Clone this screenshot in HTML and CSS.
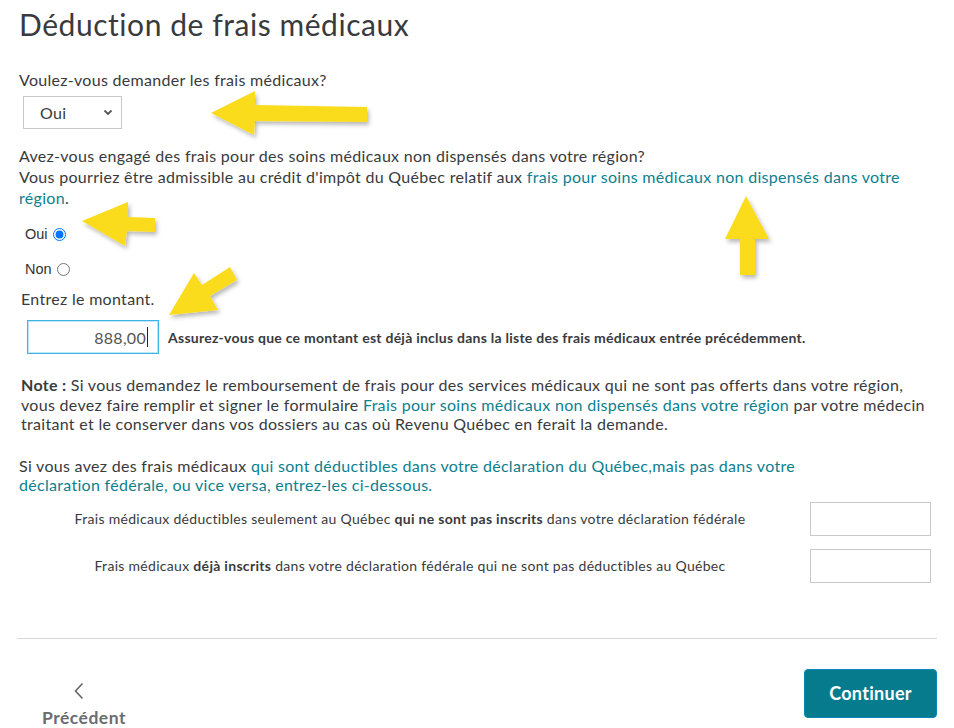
FILE: index.html
```html
<!DOCTYPE html>
<html lang="fr">
<head>
<meta charset="utf-8">
<title>Déduction de frais médicaux</title>
<link rel="stylesheet" href="styles.css">
</head>
<body>
<div class="page">
  <h1 class="title">Déduction de frais médicaux</h1>

  <p class="q q-first">Voulez-vous demander les frais médicaux?</p>
  <div class="select-wrap">
    <select class="select"><option>Oui</option><option>Non</option></select>
    <svg class="chev" width="10" height="7" viewBox="0 0 10 7"><path d="M1.5 1.5 L5 5 L8.5 1.5" fill="none" stroke="#555" stroke-width="1.8"/></svg>
  </div>

  <p class="q q-second">Avez-vous engagé des frais pour des soins médicaux non dispensés dans votre région?<br>Vous pourriez être admissible au crédit d'impôt du Québec relatif aux <a class="link" href="#">frais pour soins médicaux non dispensés dans votre région</a>.</p>

  <div class="radios">
    <label class="radio">Oui <input type="radio" name="r" checked></label>
    <label class="radio">Non <input type="radio" name="r"></label>
  </div>

  <p class="amount-label">Entrez le montant.</p>
  <div class="amount-row">
    <div class="amount-input">888,00<span class="caret"></span></div>
    <span class="amount-hint">Assurez-vous que ce montant est déjà inclus dans la liste des frais médicaux entrée précédemment.</span>
  </div>

  <p class="note"><strong>Note :</strong> Si vous demandez le remboursement de frais pour des services médicaux qui ne sont pas offerts dans votre région, vous devez faire remplir et signer le formulaire <a class="link" href="#">Frais pour soins médicaux non dispensés dans votre région</a> par votre médecin traitant et le conserver dans vos dossiers au cas où Revenu Québec en ferait la demande.</p>

  <p class="intro">Si vous avez des frais médicaux <a class="link" href="#">qui sont déductibles dans votre déclaration du Québec,mais pas dans votre déclaration fédérale, ou vice versa, entrez-les ci-dessous.</a></p>

  <div class="rows">
    <div class="row">
      <span class="row-label">Frais médicaux déductibles seulement au Québec <b>qui ne sont pas inscrits</b> dans votre déclaration fédérale</span>
      <input class="row-input" type="text">
    </div>
    <div class="row">
      <span class="row-label">Frais médicaux <b>déjà inscrits</b> dans votre déclaration fédérale qui ne sont pas déductibles au Québec</span>
      <input class="row-input" type="text">
    </div>
  </div>

  <hr class="sep">

  <div class="nav">
    <button class="prev" type="button">
      <svg class="prev-chev" width="12" height="18" viewBox="0 0 12 18"><path d="M9.5 1.5 L2.5 9 L9.5 16.5" fill="none" stroke="#666" stroke-width="1.6"/></svg>
      <span>Précédent</span>
    </button>
    <button class="next" type="button">Continuer</button>
  </div>
</div>

<svg class="arrows" width="954" height="728" viewBox="0 0 954 728">
  <defs>
    <filter id="sh" x="-20%" y="-20%" width="140%" height="160%">
      <feDropShadow dx="2" dy="3" stdDeviation="2" flood-color="#000" flood-opacity="0.28"/>
    </filter>
  </defs>
  <g fill="#fadc1e" filter="url(#sh)">
    <polygon points="211,113 255,91 255,105 367,107 367,122 255,121 254,135"/>
    <polygon points="82,221 128,202 128,217 155,218 155,232 127,231 125,246"/>
    <polygon points="746,196 769,239 755,239 755,275 740,275 740,239 725,239"/>
    <polygon points="169,315 194,273 202,285 230,267 237,280 210,296 218,310"/>
  </g>
</svg>
</body>
</html>
```

FILE: styles.css
```css
* { box-sizing: border-box; }
html, body { margin: 0; padding: 0; background: #fff; }
body {
  font-family: Lato, "Open Sans", sans-serif;
  color: #393a3d;
  width: 954px;
  height: 728px;
  overflow: hidden;
  position: relative;
  letter-spacing: 0.3px;
}
.page { padding: 0 17px 0 19px; }
p { margin: 0; }
.title {
  margin: 0;
  padding-top: 4px;
  font-size: 30px;
  font-weight: 400;
  line-height: 40px;
  color: #393a3d;
  letter-spacing: 0.55px;
}
.q { font-size: 16px; line-height: 21px; }
.q-first { margin-top: 25px; }
.select-wrap { position: relative; width: 99px; height: 33px; margin: 6px 0 0 4px; }
.select {
  appearance: none;
  -webkit-appearance: none;
  width: 99px;
  height: 33px;
  border: 1px solid #c7c7c7;
  border-radius: 0;
  background: #fff;
  font-family: inherit;
  font-size: 16px;
  letter-spacing: 0.3px;
  color: #393a3d;
  padding: 0 0 0 16px;
}
.chev { position: absolute; right: 9px; top: 13px; pointer-events: none; }
.q-second { margin-top: 16px; line-height: 21px; }
.link { color: #0d8090; text-decoration: none; }
.radios { display: flex; flex-direction: column; gap: 17px; margin: 17px 0 0 6px; }
.radio {
  font-family: "Liberation Sans", Arial, sans-serif;
  font-size: 14.5px;
  letter-spacing: 0;
  color: #333;
  display: flex;
  align-items: center;
  gap: 3px;
  height: 18px;
}
.radio input { margin: 0 0 0 2px; width: 13px; height: 13px; }
.amount-label { margin: 10px 0 0 2px; font-size: 16px; line-height: 21px; }
.amount-row { display: flex; align-items: center; gap: 9px; margin: 11px 0 0 8px; }
.amount-input {
  width: 132px;
  height: 34px;
  border: 1px solid #3eb3e6;
  box-shadow: inset 0 0 0 1px #bfe6f8;
  padding: 0 10px 0 0;
  font-size: 16px;
  color: #555;
  display: flex;
  align-items: center;
  justify-content: flex-end;
}
.caret { display: inline-block; width: 1px; height: 20px; background: #222; margin-left: 1px; }
.amount-hint { font-size: 14px; letter-spacing: 0.25px; font-weight: 700; color: #393a3d; }
.note { margin: 21px 0 0 2px; font-size: 16px; line-height: 19.5px; }
.note strong { font-weight: 700; }
.intro { margin: 22px 0 0 0; font-size: 16px; line-height: 19.5px; width: 810px; }
.rows { display: flex; flex-direction: column; gap: 13px; margin-top: 7px; }
.row { display: flex; align-items: center; }
.row-label { width: 782px; text-align: center; font-size: 14px; letter-spacing: 0.3px; color: #393a3d; }
.row-label b { font-weight: 700; }
.row-input {
  margin-left: 9px;
  width: 121px;
  height: 34px;
  border: 1px solid #c9c9c9;
  border-radius: 0;
  padding: 0;
}
.sep { border: 0; border-top: 1px solid #d6d6dc; margin: 55px 0 0 -2px; width: 920px; }
.nav { display: flex; justify-content: space-between; align-items: flex-start; margin-top: 30px; }
.prev {
  background: none;
  border: 0;
  padding: 0;
  margin: 13px 0 0 23px;
  display: flex;
  flex-direction: column;
  align-items: center;
  gap: 7px;
  font-family: inherit;
  font-size: 17.5px;
  letter-spacing: 0.5px;
  font-weight: 700;
  color: #6b6c72;
}
.prev-chev { margin-right: 10px; }
.next {
  width: 133px;
  height: 49px;
  background: #057b8d;
  border: 1px solid #0a87b8;
  border-radius: 4px;
  color: #fff;
  font-family: inherit;
  font-size: 18px;
  letter-spacing: 0.3px;
  font-weight: 700;
}
.arrows { position: absolute; left: 0; top: 0; pointer-events: none; }
```
